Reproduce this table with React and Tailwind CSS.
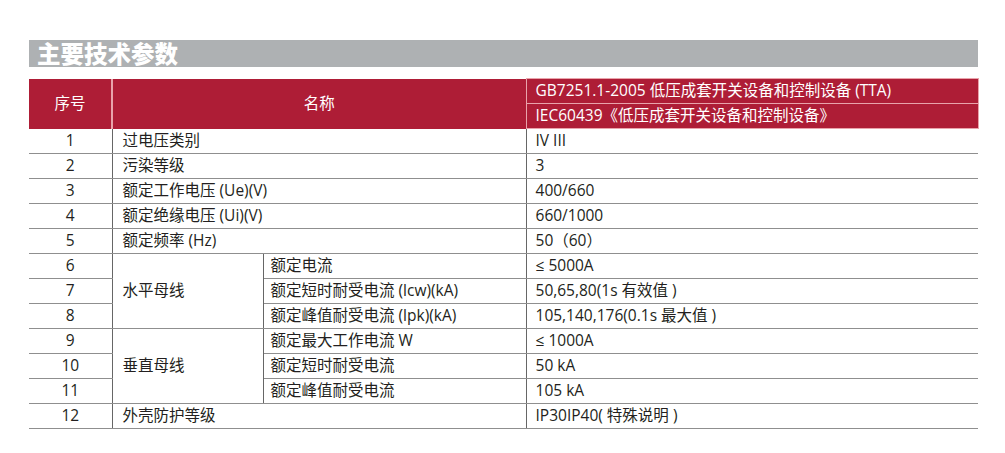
export default function App() {
  const rows = [
    { n: "1", name: "过电压类别", v: "IV III" },
    { n: "2", name: "污染等级", v: "3" },
    { n: "3", name: "额定工作电压 (Ue)(V)", v: "400/660" },
    { n: "4", name: "额定绝缘电压 (Ui)(V)", v: "660/1000" },
    { n: "5", name: "额定频率 (Hz)", v: "50（60）" },
  ];
  const groups = [
    {
      label: "水平母线",
      items: [
        { n: "6", name: "额定电流", v: "≤ 5000A" },
        { n: "7", name: "额定短时耐受电流 (lcw)(kA)", v: "50,65,80(1s 有效值 )" },
        { n: "8", name: "额定峰值耐受电流 (lpk)(kA)", v: "105,140,176(0.1s 最大值 )" },
      ],
    },
    {
      label: "垂直母线",
      items: [
        { n: "9", name: "额定最大工作电流 W", v: "≤ 1000A" },
        { n: "10", name: "额定短时耐受电流", v: "50 kA" },
        { n: "11", name: "额定峰值耐受电流", v: "105 kA" },
      ],
    },
  ];
  const cellB = "border-b border-[#8f8f8f]";
  return (
    <div className="w-[1005px] h-[453px] bg-white pt-[40px] pl-[29px] text-[#231f20] font-['Open_Sans','Noto_Sans_CJK_SC',sans-serif]">
      <div className="w-[949px] h-[27px] bg-[#aeb1b3] flex items-center pl-[8px]">
        <span className="text-white font-black text-[23.5px] leading-none font-['Noto_Sans_CJK_SC',sans-serif]">主要技术参数</span>
      </div>
      <table className="mt-[11px] w-[949px] table-fixed border-collapse text-[15.5px] leading-none">
        <colgroup>
          <col className="w-[83px]" />
          <col className="w-[151px]" />
          <col className="w-[263px]" />
          <col className="w-[452px]" />
        </colgroup>
        <thead>
          <tr className="h-[25px]">
            <th rowSpan={2} className="bg-[#ae1d36] text-white font-normal border-r-2 border-[#e9a3ab]">序号</th>
            <th rowSpan={2} colSpan={2} className="bg-[#ae1d36] text-white font-normal border-r border-[#e9a3ab]">名称</th>
            <th className="bg-[#ae1d36] text-white font-normal text-left pl-[9px] border border-[#e9a3ab]">GB7251.1-2005 低压成套开关设备和控制设备 (TTA)</th>
          </tr>
          <tr className="h-[25px]">
            <th className="bg-[#ae1d36] text-white font-normal text-left pl-[9px] border border-[#e9a3ab]">IEC60439《低压成套开关设备和控制设备》</th>
          </tr>
        </thead>
        <tbody>
          {rows.map((r) => (
            <tr key={r.n} className="h-[25px]">
              <td className={`${cellB} text-center border-r border-r-[#666]`}>{r.n}</td>
              <td colSpan={2} className={`${cellB} pl-[10px] border-r border-r-[#666]`}>{r.name}</td>
              <td className={`${cellB} pl-[9px]`}>{r.v}</td>
            </tr>
          ))}
          {groups.map((g) =>
            g.items.map((it, i) => (
              <tr key={it.n} className="h-[25px]">
                <td className={`${cellB} text-center border-r border-r-[#666]`}>{it.n}</td>
                {i === 0 && (
                  <td rowSpan={3} className={`${cellB} pl-[10px] border-r border-r-[#666]`}>{g.label}</td>
                )}
                <td className={`${cellB} pl-[7px] border-r border-r-[#666]`}>{it.name}</td>
                <td className={`${cellB} pl-[9px]`}>{it.v}</td>
              </tr>
            ))
          )}
          <tr className="h-[25px]">
            <td className={`${cellB} text-center border-r border-r-[#666]`}>12</td>
            <td colSpan={2} className={`${cellB} pl-[10px] border-r border-r-[#666]`}>外壳防护等级</td>
            <td className={`${cellB} pl-[9px]`}>IP30IP40( 特殊说明 )</td>
          </tr>
        </tbody>
      </table>
    </div>
  );
}
